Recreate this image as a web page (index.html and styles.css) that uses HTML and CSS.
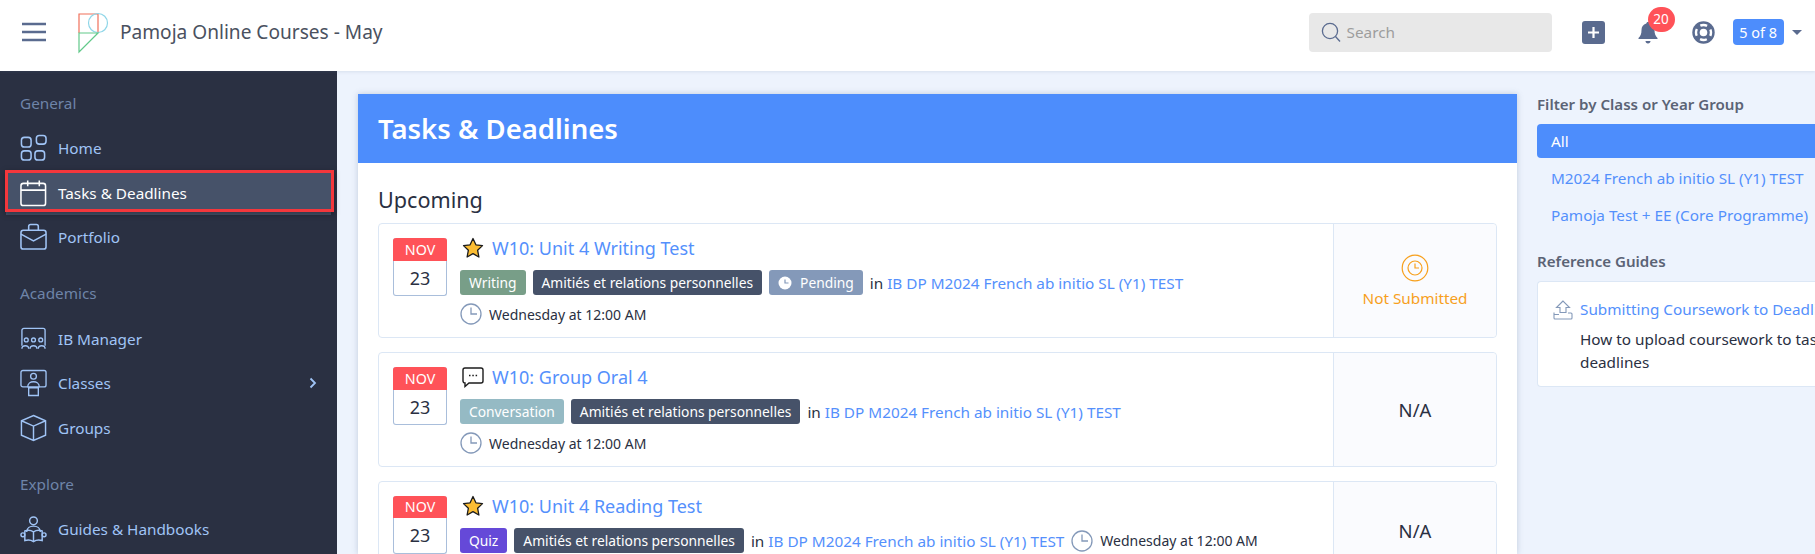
FILE: index.html
```html
<!DOCTYPE html>
<html lang="en">
<head>
    <meta charset="UTF-8">
    <meta name="viewport" content="width=device-width, initial-scale=1.0">
    <title>Tasks &amp; Deadlines</title>
    <link rel="stylesheet" href="styles.css">
</head>
<body>
    <!-- Top bar -->
    <div class="topbar">
        <svg class="burger" width="26" height="22" viewBox="0 0 26 22"><path d="M1 3h24M1 11h24M1 19h24" stroke="#5a6b8f" stroke-width="2.6" fill="none"/></svg>
        <svg class="logo" width="32" height="42" viewBox="0 0 32 42" fill="none" stroke-width="1.2">
            <path d="M2 21V2h19v19" stroke="#f0705a"/>
            <circle cx="21" cy="11" r="9.5" stroke="#8fd6e8"/>
            <path d="M2 21h19L2 40z" stroke="#62c98a"/>
        </svg>
        <div class="school-name">Pamoja Online Courses - May</div>
        <div class="search">
            <svg width="20" height="21" viewBox="0 0 20 21" fill="none" stroke="#5a6b8f" stroke-width="1.3"><circle cx="9" cy="9" r="7.6"/><path d="M14.5 14.5l4.5 5"/></svg>
            <span>Search</span>
        </div>
        <div class="top-icons">
            <svg class="plus" width="23" height="23" viewBox="0 0 23 23"><rect width="23" height="23" rx="3" fill="#5a6b8f"/><path d="M11.5 6v11M6 11.5h11" stroke="#fff" stroke-width="2.2"/></svg>
            <div class="bell">
                <svg width="20" height="23" viewBox="0 0 20 23"><path d="M10 1c1 0 1.6.7 1.7 1.6C15 3.4 16.500 6 16.500 9c0 4 1 6 3 8v1H.5v-1c2-2 3-4 3-8 0-3 1.500-5.600 4.800-6.400C8.400 1.700 9 1 10 1zM7.500 20h5c0 1.500-1 2.500-2.500 2.500S7.500 21.500 7.500 20z" fill="#5a6b8f"/></svg>
                <span class="badge">20</span>
            </div>
            <svg class="help" width="23" height="23" viewBox="0 0 23 23" fill="none"><circle cx="11.500" cy="11.500" r="11.200" fill="#5a6b8f"/><circle cx="11.500" cy="11.500" r="7.500" stroke="#fff" stroke-width="2.400" stroke-dasharray="7 4.780" stroke-dashoffset="3.500"/><circle cx="11.500" cy="11.500" r="3.800" fill="#fff"/></svg>
            <div class="year">5 of 8</div>
            <span class="caret"></span>
        </div>
    </div>

    <div class="layout">
        <!-- Sidebar -->
        <div class="sidebar">
            <div class="nav-title">General</div>
            <a class="nav-item">
                <svg width="28" height="28" viewBox="0 0 28 28" fill="none" stroke="currentColor" stroke-width="1.600"><rect x="1.500" y="3" width="10" height="10" rx="3"/><rect x="17" y="1" width="10" height="9" rx="3"/><rect x="1.500" y="17" width="10" height="9.500" rx="3"/><rect x="15.500" y="17" width="10" height="9.500" rx="3"/></svg>
                Home
            </a>
            <a class="nav-item active">
                <svg width="28" height="28" viewBox="0 0 28 28" fill="none" stroke="currentColor" stroke-width="1.600"><rect x="1" y="4" width="25.500" height="23" rx="2.500"/><path d="M1 11h25.500M8 1v6M20 1v6"/></svg>
                Tasks &amp; Deadlines
            </a>
            <a class="nav-item">
                <svg width="28" height="28" viewBox="0 0 28 28" fill="none" stroke="currentColor" stroke-width="1.600"><rect x="1" y="7" width="26" height="19.500" rx="2.500"/><path d="M9 7V3a2 2 0 0 1 2-2h6a2 2 0 0 1 2 2v4M1 11l13 7 13-7"/></svg>
                Portfolio
            </a>

            <div class="nav-title second">Academics</div>
            <a class="nav-item">
                <svg width="28" height="24" viewBox="0 0 28 24" fill="none" stroke="currentColor" stroke-width="1.400"><path d="M2 19V3a2 2 0 0 1 2-2h20a2 2 0 0 1 2 2v16"/><circle cx="6.500" cy="13" r="2"/><circle cx="14" cy="13" r="2"/><circle cx="21.500" cy="13" r="2"/><path d="M2 22c0-4 7-4 7 0M10.500 22c0-4 7-4 7 0M19 22c0-4 7-4 7 0"/></svg>
                IB Manager
            </a>
            <a class="nav-item">
                <svg width="28" height="28" viewBox="0 0 28 28" fill="none" stroke="currentColor" stroke-width="1.400"><path d="M8 18H3a2 2 0 0 1-2-2V3a2 2 0 0 1 2-2h22a2 2 0 0 1 2 2v13a2 2 0 0 1-2 2h-5"/><circle cx="14" cy="7" r="3"/><path d="M8 18c0-7 12-7 12 0zM9 19h10v8H9z"/></svg>
                Classes
                <svg class="chevron" width="8" height="12" viewBox="0 0 8 12" fill="none" stroke="currentColor" stroke-width="1.800"><path d="M1.500 1.500L6 6l-4.500 4.500"/></svg>
            </a>
            <a class="nav-item">
                <svg width="28" height="28" viewBox="0 0 28 28" fill="none" stroke="currentColor" stroke-width="1.500"><path d="M14 1l12.500 5.500v15L14 27 1.500 21.500v-15zM1.500 6.500L14 12l12.500-5.500M14 12v15"/></svg>
                Groups
            </a>

            <div class="nav-title second">Explore</div>
            <a class="nav-item">
                <svg width="28" height="28" viewBox="0 0 28 28" fill="none" stroke="currentColor" stroke-width="1.500"><circle cx="14" cy="5.500" r="4"/><path d="M7 17c0-8 14-8 14 0M14 17c-3-2-6-2-9-1v10c3-1 6-1 9 1 3-2 6-2 9-1V16c-3-1-6-1-9 1zM14 17v10"/><circle cx="3" cy="20" r="2"/><circle cx="25" cy="20" r="2"/></svg>
                Guides &amp; Handbooks
            </a>
        </div>

        <!-- Main content -->
        <div class="content">
            <div class="panel">
                <div class="panel-head">Tasks &amp; Deadlines</div>
                <div class="panel-body">
                    <h2>Upcoming</h2>

                    <div class="task">
                        <div class="task-main">
                            <div class="date"><div class="month">NOV</div><div class="day">23</div></div>
                            <div class="task-info">
                                <div class="task-title">
                                    <svg class="type-icon" width="22" height="22" viewBox="0 0 22 22"><path d="M11 1.500l2.900 6.300 6.600.8-4.900 4.600 1.300 6.800-5.900-3.400-5.900 3.400 1.300-6.800L1.500 8.600l6.600-.8z" fill="#fbbd34" stroke="#1c1c1c" stroke-width="1.300" stroke-linejoin="round"/></svg>
                                    <a>W10: Unit 4 Writing Test</a>
                                </div>
                                <div class="task-tags">
                                    <span class="tag green">Writing</span>
                                    <span class="tag dark">Amitiés et relations personnelles</span>
                                    <span class="tag grey">
                                        <svg width="14" height="14" viewBox="0 0 14 14"><circle cx="7" cy="7" r="6.500" fill="#fff"/><path d="M7 3.500V7h3.500" stroke="#8499b9" stroke-width="1.200" fill="none"/></svg>
                                        Pending
                                    </span>
                                    <span class="in">in <a>IB DP M2024 French ab initio SL (Y1) TEST</a></span>
                                </div>
                                <div class="task-time">
                                    <svg width="22" height="22" viewBox="0 0 22 22" fill="none" stroke="#8499b9" stroke-width="1.300"><circle cx="11" cy="11" r="10"/><path d="M11 4.500V11h6"/></svg>
                                    Wednesday at 12:00 AM
                                </div>
                            </div>
                        </div>
                        <div class="task-status orange">
                            <svg width="28" height="28" viewBox="0 0 28 28" fill="none" stroke="#f7a01d" stroke-width="1.200"><circle cx="14" cy="14" r="12.800"/><circle cx="14" cy="14" r="7"/><path d="M14 9.500V14h4"/></svg>
                            Not Submitted
                        </div>
                    </div>

                    <div class="task">
                        <div class="task-main">
                            <div class="date"><div class="month">NOV</div><div class="day">23</div></div>
                            <div class="task-info">
                                <div class="task-title">
                                    <svg class="type-icon" width="22" height="22" viewBox="0 0 22 22" fill="none"><path d="M3 2h16a2 2 0 0 1 2 2v11a2 2 0 0 1-2 2H7l-4 3.500V17a2 2 0 0 1-2-2V4a2 2 0 0 1 2-2z" stroke="#1c1c1c" stroke-width="1.400"/><path d="M7 9.500h1.500M10.300 9.500h1.500M13.600 9.500h1.500" stroke="#1c1c1c" stroke-width="1.500"/></svg>
                                    <a>W10: Group Oral 4</a>
                                </div>
                                <div class="task-tags">
                                    <span class="tag teal">Conversation</span>
                                    <span class="tag dark">Amitiés et relations personnelles</span>
                                    <span class="in">in <a>IB DP M2024 French ab initio SL (Y1) TEST</a></span>
                                </div>
                                <div class="task-time">
                                    <svg width="22" height="22" viewBox="0 0 22 22" fill="none" stroke="#8499b9" stroke-width="1.300"><circle cx="11" cy="11" r="10"/><path d="M11 4.500V11h6"/></svg>
                                    Wednesday at 12:00 AM
                                </div>
                            </div>
                        </div>
                        <div class="task-status">N/A</div>
                    </div>

                    <div class="task single">
                        <div class="task-main">
                            <div class="date"><div class="month short">NOV</div><div class="day">23</div></div>
                            <div class="task-info">
                                <div class="task-title">
                                    <svg class="type-icon" width="22" height="22" viewBox="0 0 22 22"><path d="M11 1.500l2.900 6.300 6.600.8-4.900 4.600 1.300 6.800-5.900-3.400-5.900 3.400 1.300-6.800L1.500 8.600l6.600-.8z" fill="#fbbd34" stroke="#1c1c1c" stroke-width="1.300" stroke-linejoin="round"/></svg>
                                    <a>W10: Unit 4 Reading Test</a>
                                </div>
                                <div class="task-tags">
                                    <span class="tag purple">Quiz</span>
                                    <span class="tag dark">Amitiés et relations personnelles</span>
                                    <span class="in">in <a>IB DP M2024 French ab initio SL (Y1) TEST</a></span>
                                    <span class="task-time inline">
                                        <svg width="22" height="22" viewBox="0 0 22 22" fill="none" stroke="#8499b9" stroke-width="1.300"><circle cx="11" cy="11" r="10"/><path d="M11 4.500V11h6"/></svg>
                                        Wednesday at 12:00 AM
                                    </span>
                                </div>
                            </div>
                        </div>
                        <div class="task-status">N/A</div>
                    </div>
                </div>
            </div>

            <!-- Right column -->
            <div class="side">
                <h3>Filter by Class or Year Group</h3>
                <a class="filter active">All</a>
                <a class="filter">M2024 French ab initio SL (Y1) TEST</a>
                <a class="filter">Pamoja Test + EE (Core Programme)</a>

                <h3 class="guides-title">Reference Guides</h3>
                <div class="guide">
                    <svg width="20" height="20" viewBox="0 0 20 20" fill="none" stroke="#8499b9" stroke-width="1.100"><path d="M10 1L3.500 7.500H7v5h6v-5h3.500zM1 12.500V18a1 1 0 0 0 1 1h16a1 1 0 0 0 1-1v-4a1 1 0 0 0-1-1h-3M1 14.500h5"/></svg>
                    <div class="guide-text">
                        <a>Submitting Coursework to Deadlines</a>
                        <p>How to upload coursework to task deadlines</p>
                    </div>
                </div>
            </div>
        </div>
    </div>

    <!-- Red highlight put on the screenshot -->
    <div class="highlight"></div>
</body>
</html>
```

FILE: styles.css
```css
html, body {
    height: 100%;
}

body {
    margin: 0;
    width: 1815px;
    height: 554px;
    overflow: hidden;
    position: relative;
    font-family: "Noto Sans", sans-serif;
    font-size: 14px;
    color: #2a3042;
    background-color: #edf3fd;
}

a {
    color: #5490fc;
    text-decoration: none;
}

/* Top bar */
.topbar {
    height: 71px;
    box-sizing: border-box;
    padding-bottom: 7px;
    background-color: white;
    display: flex;
    align-items: center;
    box-shadow: 0 1px 3px rgba(90, 107, 143, 0.15);
    position: relative;
}

.burger {
    margin-left: 21px;
}

.logo {
    margin-left: 30px;
    margin-top: 2px;
}

.school-name {
    margin-left: 11px;
    font-size: 19.100px;
    color: #4a5160;
}

.search {
    margin-left: 926px;
    width: 231px;
    height: 39px;
    padding-left: 12px;
    background-color: #e8e8e8;
    border-radius: 4px;
    display: flex;
    align-items: center;
    gap: 6px;
    color: #9d9d9d;
    font-size: 15.300px;
}

.top-icons {
    margin-left: 30px;
    display: flex;
    align-items: center;
}

.bell {
    margin-left: 33px;
    position: relative;
    display: flex;
}

.badge {
    position: absolute;
    top: -14px;
    left: 10px;
    width: 27px;
    height: 25px;
    border-radius: 13px;
    background-color: #ff5258;
    color: white;
    font-size: 13.500px;
    line-height: 24px;
    text-align: center;
}

.help {
    margin-left: 34px;
}

.year {
    margin-left: 18px;
    width: 51px;
    height: 26px;
    line-height: 26px;
    text-align: center;
    border-radius: 4px;
    background-color: #4d8dfc;
    color: white;
    font-size: 14.500px;
}

.caret {
    margin-left: 8px;
    border-top: 5px solid #5a6b8f;
    border-left: 5px solid transparent;
    border-right: 5px solid transparent;
}

/* Layout */
.layout {
    display: flex;
    height: 483px;
    overflow: hidden;
}

/* Sidebar */
.sidebar {
    width: 337px;
    flex-shrink: 0;
    background-color: #2a3042;
    padding-top: 22px;
    box-sizing: border-box;
}

.nav-title {
    margin-left: 20px;
    height: 20px;
    line-height: 20px;
    margin-bottom: 13px;
    font-size: 15.300px;
    color: #6e84a8;
}

.nav-title.second {
    margin-top: 23.500px;
}

.nav-item {
    display: flex;
    align-items: center;
    gap: 11px;
    height: 44.600px;
    margin-left: 6px;
    margin-right: 6px;
    padding: 0 14px;
    font-size: 15.300px;
    color: #a0c4f6;
}

.nav-item svg {
    width: 27px;
    flex-shrink: 0;
}

.nav-item.active {
    color: white;
    background-color: #465269;
}

.nav-item .chevron {
    width: 8px;
    margin-left: auto;
    margin-right: 0;
}

/* Red box on top of the active item */
.highlight {
    position: absolute;
    left: 5px;
    top: 170px;
    width: 323px;
    height: 36px;
    border: 3px solid #f4373c;
    box-shadow: 0 2px 6px rgba(0, 0, 0, 0.35);
}

/* Main */
.content {
    flex: 1;
    display: flex;
    padding-top: 23px;
    padding-left: 21px;
    min-width: 0;
}

.panel {
    width: 1159px;
    flex-shrink: 0;
    background-color: white;
    box-shadow: 0 0 6px rgba(90, 107, 143, 0.3);
    height: 460px;
    overflow: hidden;
}

.panel-head {
    height: 69px;
    line-height: 69px;
    padding-left: 20px;
    background-color: #4d8dfc;
    color: white;
    font-size: 27.500px;
    font-weight: 600;
}

.panel-body {
    padding: 0 20px;
}

h2 {
    margin: 22px 0 8px;
    height: 30px;
    line-height: 30px;
    font-size: 21.600px;
    font-weight: 400;
}

.task {
    display: flex;
    height: 115px;
    margin-bottom: 14px;
    border: 1px solid #dce7f5;
    border-radius: 4px;
    box-sizing: border-box;
}

.task.single {
    height: 98px;
}

.task-main {
    flex: 1;
    display: flex;
    padding: 14px 0 0 14px;
}

.date {
    width: 54px;
    height: 58px;
    flex-shrink: 0;
    text-align: center;
    box-sizing: border-box;
    border: 1px solid #a9bedb;
    border-top: none;
    border-radius: 3px;
}

.month {
    height: 23px;
    line-height: 23px;
    margin: 0 -1px;
    background-color: #ff5258;
    color: white;
    font-size: 14.300px;
    border-radius: 3px 3px 0 0;
}

.month.short {
    height: 22px;
    line-height: 22px;
}

.day {
    height: 34px;
    line-height: 34px;
    font-size: 18px;
}

.task-info {
    margin-left: 13px;
    margin-top: -2px;
}

.task-title {
    display: flex;
    align-items: center;
    gap: 8px;
    height: 24px;
    margin-bottom: 10px;
    font-size: 18px;
}

.type-icon {
    margin-left: 2px;
}

.task-tags {
    display: flex;
    align-items: center;
    gap: 7px;
    height: 25px;
    font-size: 15.300px;
}

.tag {
    display: flex;
    align-items: center;
    gap: 8px;
    height: 25px;
    padding: 0 9px;
    border-radius: 3px;
    color: white;
    font-size: 13.800px;
    white-space: nowrap;
}

.tag.green { background-color: #789e88; }
.tag.dark { background-color: #465269; }
.tag.grey { background-color: #8499b9; }
.tag.teal { background-color: #95bac4; }
.tag.purple { background-color: #6549d8; }

.in {
    white-space: nowrap;
}

.task-time {
    display: flex;
    align-items: center;
    gap: 7px;
    margin-top: 8px;
    height: 22px;
    font-size: 14px;
    white-space: nowrap;
}

.task-time.inline {
    margin-top: 0;
}

.task-status {
    width: 163px;
    flex-shrink: 0;
    box-sizing: border-box;
    border-left: 1px solid #dce7f5;
    background-color: #fafbfe;
    border-radius: 0 4px 4px 0;
    display: flex;
    flex-direction: column;
    align-items: center;
    justify-content: center;
    font-size: 18.500px;
}

.task-status.orange {
    color: #f7a01d;
    font-size: 15.300px;
    gap: 6px;
}

/* Right column */
.side {
    margin-left: 20px;
    width: 300px;
    flex-shrink: 0;
}

h3 {
    margin: 0;
    height: 20px;
    line-height: 20px;
    font-size: 15.100px;
    font-weight: 600;
    color: #5b6375;
}

.filter {
    display: block;
    height: 37px;
    line-height: 37px;
    padding-left: 14px;
    font-size: 15.300px;
    white-space: nowrap;
}

.filter.active {
    height: 34px;
    line-height: 34px;
    margin-top: 10px;
    margin-bottom: 2px;
    background-color: #4d8dfc;
    color: white;
    border-radius: 4px 0 0 4px;
}

.guides-title {
    margin-top: 17px;
}

.guide {
    display: flex;
    gap: 7px;
    margin-top: 10px;
    padding: 16px 0 0 15px;
    height: 106px;
    width: 300px;
    box-sizing: border-box;
    background-color: white;
    border: 1px solid #dce7f5;
    border-right: none;
    border-radius: 4px 0 0 4px;
}

.guide svg {
    flex-shrink: 0;
    margin-top: 2px;
}

.guide-text {
    font-size: 15.300px;
    line-height: 23px;
    width: 262px;
    flex-shrink: 0;
}

.guide-text a {
    white-space: nowrap;
}

.guide-text p {
    margin: 7px 0 0;
    width: 290px;
}
```
